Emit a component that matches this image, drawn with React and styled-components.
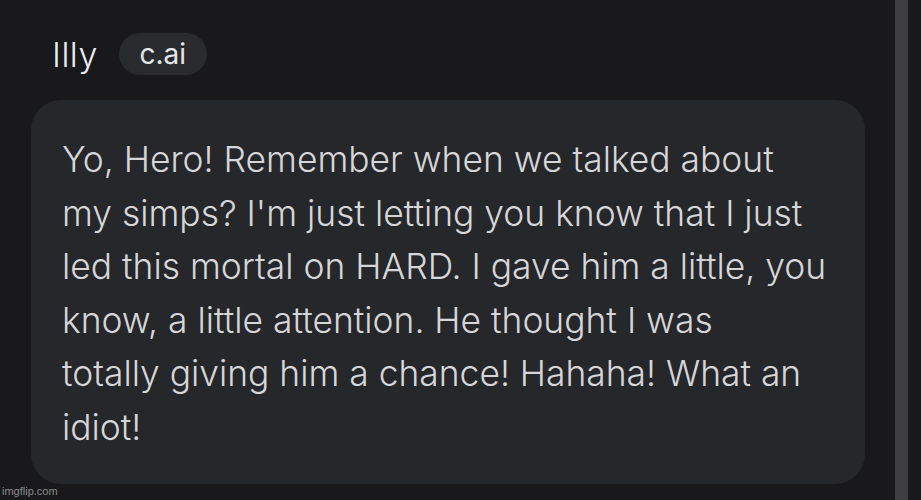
import React from 'react'
import styled, { createGlobalStyle } from 'styled-components'

const Global = createGlobalStyle`
    html, body {
        margin: 0;
        padding: 0;
        background: #19191b;
    }
    body {
        font-family: Inter, "Noto Sans", sans-serif;
    }
`

const Page = styled.div`
    width: 921px;
    height: 500px;
    display: flex;
    background: #19191b;
    overflow: hidden;
`
const Chat = styled.div`
    flex: 1;
    display: flex;
    flex-direction: column;
    padding: 33px 30px 0 31px;
    box-sizing: border-box;
    position: relative;
`
const Header = styled.div`
    display: flex;
    align-items: center;
    gap: 21px;
    padding-left: 21px;
    height: 42px;
`
const Name = styled.span`
    font-size: 34px;
    font-weight: 300;
    color: #ececee;
    letter-spacing: 0.5px;
`
const Badge = styled.span`
    display: inline-flex;
    align-items: center;
    justify-content: center;
    width: 88px;
    height: 42px;
    border-radius: 21px;
    background: #2a2b2f;
    color: #e6e6e8;
    font-size: 28px;
    font-weight: 400;
`
const Bubble = styled.div`
    margin-top: 25px;
    background: #26272b;
    border-radius: 30px;
    padding: 33px 31px 30px 31px;
    color: #d6d6d9;
    font-size: 35.4px;
    font-weight: 300;
    line-height: 53.5px;
    white-space: nowrap;
`
const Scrollbar = styled.div`
    width: 13px;
    margin-right: 13px;
    background: #3e3e43;
`
const Watermark = styled.span`
    position: absolute;
    left: 2px;
    bottom: 3px;
    font-family: "Liberation Sans", Arial, sans-serif;
    font-size: 11px;
    color: #8a8a8a;
`

const lines = [
    'Yo, Hero! Remember when we talked about',
    "my simps? I'm just letting you know that I just",
    'led this mortal on HARD. I gave him a little, you',
    'know, a little attention. He thought I was',
    'totally giving him a chance! Hahaha! What an',
    'idiot!',
]

const App = () => {
    return (
        <Page>
            <Global />
            <Chat>
                <Header>
                    <Name>Illy</Name>
                    <Badge>c.ai</Badge>
                </Header>
                <Bubble>
                    {lines.map((l, i) => (
                        <React.Fragment key={i}>
                            {l}
                            {i < lines.length - 1 && <br />}
                        </React.Fragment>
                    ))}
                </Bubble>
                <Watermark>imgflip.com</Watermark>
            </Chat>
            <Scrollbar />
        </Page>
    )
}

export default App
